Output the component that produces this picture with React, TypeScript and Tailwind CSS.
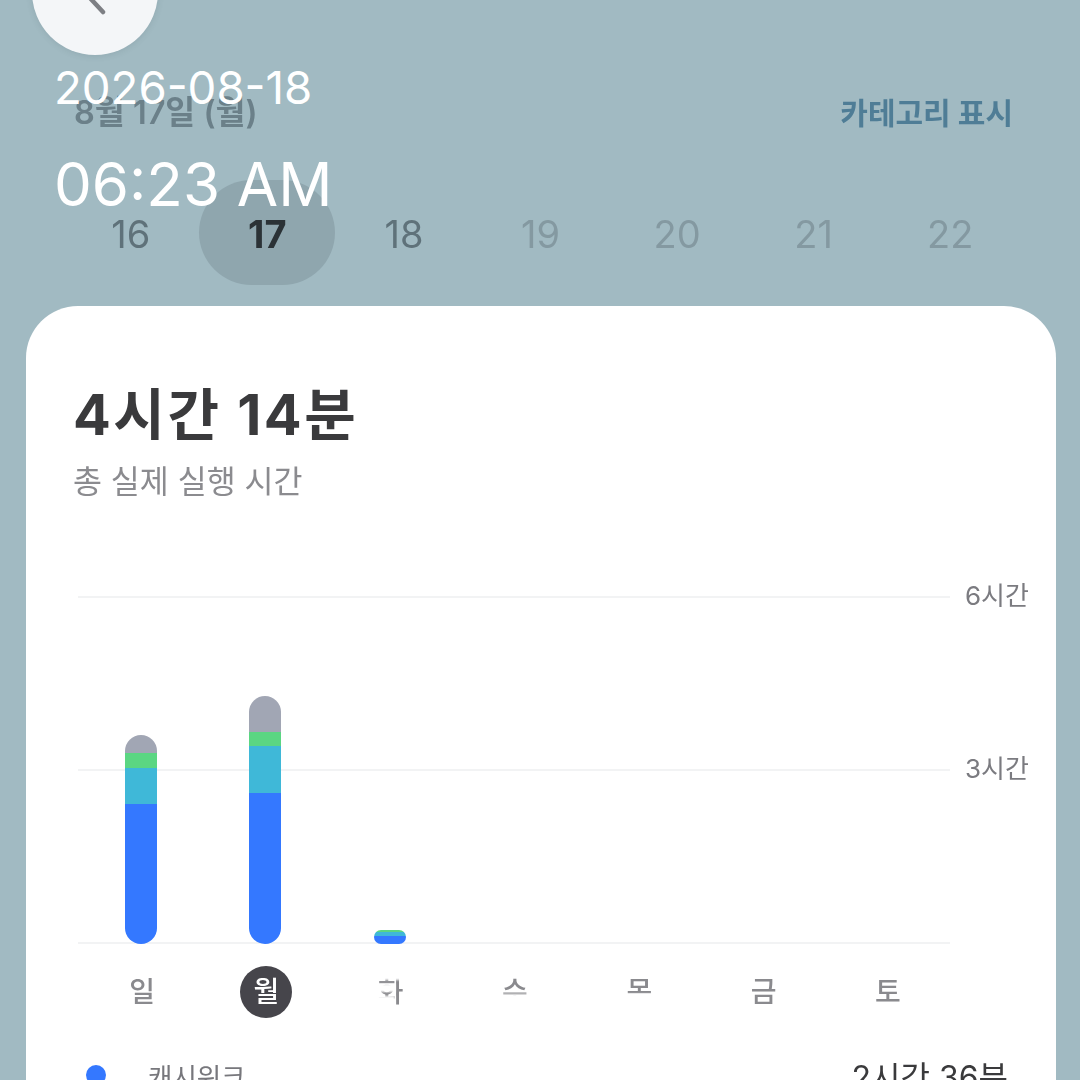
const kr = "font-['Inter','Noto_Sans_CJK_KR',sans-serif]";

const days = [
  { d: "16", c: "text-[#5f727a]" },
  { d: "17", c: "text-[#2b3236] font-bold", on: true },
  { d: "18", c: "text-[#5f727a]" },
  { d: "19", c: "text-[#8499a1]" },
  { d: "20", c: "text-[#8499a1]" },
  { d: "21", c: "text-[#8499a1]" },
  { d: "22", c: "text-[#8499a1]" },
];

const bars = [
  [18, 15, 36, 140],
  [36, 14, 47, 151],
  [0, 2, 4, 8],
  [],
  [],
  [],
  [],
];
const barColors = ["#a1a6b4", "#5bd682", "#3fb8d8", "#3478ff"];

const weekdays = ["일", "월", "화", "수", "목", "금", "토"];

function App() {
  return (
    <div className={`relative w-[1080px] h-[1080px] overflow-hidden bg-[#a1bac2] ${kr}`}>
      <div className="absolute left-[32px] top-[-71px] w-[126px] h-[126px] rounded-full bg-[#f4f6f8] shadow-[0_1px_6px_rgba(60,80,90,0.15)]">
        <svg className="absolute left-[50px] top-[50px]" width="40" height="40" viewBox="0 0 40 40" fill="none">
          <path d="M24 2 L8 19 L21 33" stroke="#7d7f84" strokeWidth="4.5" strokeLinecap="round" strokeLinejoin="round" />
        </svg>
      </div>

      <div className="absolute left-[54px] top-[60px] text-white font-['Inter',sans-serif] text-[45.6px] leading-[55px] font-normal z-10">2026-08-18</div>
      <div className="absolute left-[54px] top-[147px] text-white font-['Inter',sans-serif] text-[60px] leading-[74px] font-normal z-10">06:23 AM</div>

      <div className="flex items-center justify-between pt-[93px] pl-[74px] pr-[67px] h-[132px] blur-[0.6px]">
        <span className="text-[32.5px] leading-[40px] font-semibold text-[#6b8089]">8월 17일 (월)</span>
        <span className="text-[30px] leading-[40px] font-bold text-[#4f7d96]">카테고리 표시</span>
      </div>

      <div className="grid grid-cols-7 w-[956px] ml-[62px] mt-[48px] h-[105px] blur-[0.5px]">
        {days.map((x) => (
          <div key={x.d} className={`flex items-center justify-center pt-[3px] pl-[1px] text-[38px] ${x.c} ${x.on ? "bg-[#8fa6ae] rounded-[56px]" : ""}`}>
            {x.d}
          </div>
        ))}
      </div>

      <div className="mt-[21px] ml-[26px] w-[1030px] h-[800px] bg-white rounded-t-[52px] pt-[79px]">
        <div className="pl-[47px] text-[56px] leading-[60px] font-bold tracking-[2.5px] text-[#3a3a3c] blur-[0.5px]">4시간 14분</div>
        <div className="pl-[47px] mt-[17px] text-[31.5px] leading-[40px] text-[#8b8b8f] blur-[0.5px]">총 실제 실행 시간</div>

        <div className="relative mt-[94px] ml-[52px] w-[950px] h-[348px]">
          <div className="absolute inset-0 flex flex-col justify-between">
            {["6시간", "3시간", ""].map((t, i) => (
              <div key={i} className="relative h-[2px] w-[872px] bg-[#f2f3f4]">
                {t && (
                  <span className="absolute left-[887px] top-[-20px] text-[26px] leading-[40px] text-[#7b7b80] blur-[0.4px] whitespace-nowrap">{t}</span>
                )}
              </div>
            ))}
          </div>
          <div className="absolute left-[1px] bottom-0 w-[870px] grid grid-cols-7 items-end">
            {bars.map((b, i) => (
              <div key={i} className="flex justify-center">
                {b.length > 0 && (
                  <div className="w-[32px] rounded-full overflow-hidden flex flex-col">
                    {b.map((h, j) => (
                      <div key={j} style={{ height: h, backgroundColor: barColors[j] }} />
                    ))}
                  </div>
                )}
              </div>
            ))}
          </div>
        </div>

        <div className="grid grid-cols-7 w-[870px] ml-[54px] mt-[22px] h-[52px]">
          {weekdays.map((w, i) => (
            <div key={w} className="relative flex justify-center">
              <div className={`flex w-[52px] h-[52px] items-center justify-center rounded-full text-[28px] font-medium blur-[0.5px] ${i === 1 ? "bg-[#46454b] text-white font-bold" : "text-[#8a8a8e]"}`}>
                {w}
              </div>
              {i === 2 && <div className="absolute left-[44px] top-0 w-[36px] h-[14px] bg-white blur-[1px]" />}
              {i === 2 && <div className="absolute left-[42px] top-[18px] w-[24px] h-[8px] bg-white blur-[1px]" />}
              {i === 2 && <div className="absolute left-[42px] top-[30px] w-[24px] h-[18px] bg-white blur-[1px]" />}
              {i === 3 && <div className="absolute left-[44px] top-[28px] w-[36px] h-[16px] bg-white blur-[1px]" />}
              {i === 4 && <div className="absolute left-[44px] top-[28px] w-[36px] h-[18px] bg-white blur-[1px]" />}
            </div>
          ))}
        </div>

        <div className="flex items-center mt-[34px] pl-[60px] pr-[48px] blur-[0.5px]">
          <span className="w-[20px] h-[20px] rounded-full bg-[#3478ff]" />
          <span className="ml-[42px] mt-[4px] text-[26.5px] leading-[40px] text-[#77777c]">캐시워크</span>
          <span className="ml-auto mt-[6px] text-[32px] leading-[40px] text-[#3a3a3c]">2시간 36분</span>
        </div>
      </div>
    </div>
  );
}

export default App;
